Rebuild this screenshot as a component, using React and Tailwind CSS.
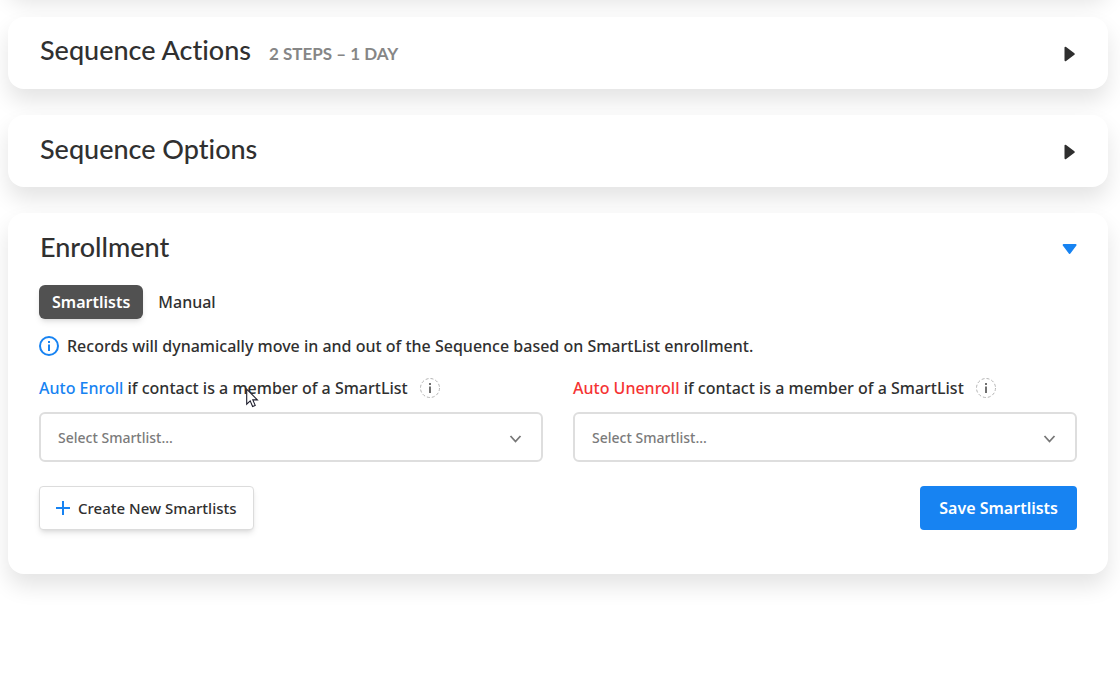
import { useState } from 'react';

const Triangle = ({ open }) => (
  <svg
    width="16"
    height="16"
    viewBox="0 0 16 16"
    className={open ? 'text-[#1783f2]' : 'text-[#2f2f2f]'}
    aria-hidden="true"
  >
    <path
      d={open ? 'M1.6 3h12L7.6 11z' : 'M3.5 1.7v12.6l8.3-6.3z'}
      fill="currentColor"
      stroke="currentColor"
      strokeWidth="2"
      strokeLinejoin="round"
    />
  </svg>
);

const Panel = ({ title, meta, open, onToggle, children }) => (
  <section className="rounded-2xl bg-white shadow-[0_12px_22px_rgba(0,0,0,0.11)]">
    <h2>
      <button
        type="button"
        onClick={onToggle}
        aria-expanded={open}
        className="flex h-[72px] w-full items-center justify-between pt-px pr-[30px] pl-8 text-left"
      >
        <span className="flex items-baseline gap-[18px] pb-[6px] font-[Lato,sans-serif] [font-variant-ligatures:none]">
          <span className="text-[27px] leading-8 text-[#303030]">{title}</span>
          {meta && <span className="text-[17px] font-bold text-[#868686]">{meta}</span>}
        </span>
        <Triangle open={open} />
      </button>
    </h2>
    {open && children}
  </section>
);

const SmartlistField = ({ id, action, color, children }) => (
  <div>
    <div className="flex h-6 items-center gap-3">
      <label htmlFor={id}>
        <span className={color}>{action}</span> if contact is a member of a SmartList
      </label>
      <button type="button" aria-label={`About ${action}`}>
        <svg width="20" height="20" viewBox="0 0 20 20" fill="none">
          <circle cx="10" cy="10" r="9.5" stroke="#b5b5b5" strokeDasharray="3 2" />
          <path d="M10 5v2M10 8.5V15" stroke="#707070" strokeWidth="2" />
        </svg>
      </button>
    </div>
    <div className="relative mt-3">
      <select
        id={id}
        className="h-[50px] w-full appearance-none rounded-md border-2 border-[#dedede] bg-white px-[17px] pt-0.5 text-sm text-[#7b7b7b]"
      >
        <option>Select Smartlist...</option>
      </select>
      {children}
      <svg
        width="14"
        height="14"
        viewBox="0 0 14 14"
        fill="none"
        className="pointer-events-none absolute top-5 right-5"
      >
        <path d="M1.5 4l5 5.5 5-5.5" stroke="#777" strokeWidth="1.8" />
      </svg>
    </div>
  </div>
);

const Pointer = () => (
  <svg
    width="13"
    height="20"
    viewBox="0 0 13 20"
    className="pointer-events-none absolute -top-6 left-[207px]"
    aria-hidden="true"
  >
    <path
      d="M.7 1.2v15l3.5-3.3 2.4 5.6 2.6-1.1-2.4-5.5h4.6z"
      fill="#fff"
      stroke="#1c1c2c"
      strokeWidth="1.1"
    />
  </svg>
);

export default function App() {
  const [open, setOpen] = useState({ actions: false, options: false, enrollment: true });
  const [tab, setTab] = useState('Smartlists');

  const toggle = (key) => setOpen({ ...open, [key]: !open[key] });

  return (
    <main className="min-h-screen overflow-hidden bg-white pr-3 pb-8 pl-2 font-['Noto_Sans',sans-serif] text-base font-medium text-[#303030]">
      <div className="-mt-[82px] flex flex-col gap-[26px]">
        {/* tail of the panel that is scrolled off the top */}
        <div className="h-[73px] rounded-2xl bg-white shadow-[0_12px_22px_rgba(0,0,0,0.11)]" />
        <Panel
          title="Sequence Actions"
          meta="2 STEPS – 1 DAY"
          open={open.actions}
          onToggle={() => toggle('actions')}
        />
        <Panel title="Sequence Options" open={open.options} onToggle={() => toggle('options')} />
        <Panel title="Enrollment" open={open.enrollment} onToggle={() => toggle('enrollment')}>
          <div className="px-[31px] pb-11">
            <div className="flex gap-0.5">
              {['Smartlists', 'Manual'].map((name) => (
                <button
                  key={name}
                  type="button"
                  onClick={() => setTab(name)}
                  className={
                    tab === name
                      ? 'h-[34px] rounded-md bg-[#515151] px-[13px] font-semibold text-white shadow-md'
                      : 'h-[34px] rounded-md px-[13px]'
                  }
                >
                  {name}
                </button>
              ))}
            </div>

            <p className="mt-[15px] flex items-center gap-2">
              <svg width="20" height="20" viewBox="0 0 20 20" fill="none" className="shrink-0">
                <circle cx="10" cy="10" r="9" stroke="#1783f2" strokeWidth="2" />
                <path d="M10 5v2M10 8.5V15" stroke="#1783f2" strokeWidth="2" />
              </svg>
              Records will dynamically move in and out of the Sequence based on SmartList
              enrollment.
            </p>

            <div className="mt-[18px] grid grid-cols-2 gap-[30px]">
              <SmartlistField id="auto-enroll" action="Auto Enroll" color="text-[#1783f2]">
                <Pointer />
              </SmartlistField>
              <SmartlistField id="auto-unenroll" action="Auto Unenroll" color="text-[#f53333]" />
            </div>

            <div className="mt-6 flex items-center justify-between">
              <button
                type="button"
                className="flex h-11 items-center gap-2 rounded border border-[#dcdcdc] bg-white px-4 text-[15px] shadow-md"
              >
                <svg width="14" height="14" viewBox="0 0 14 14">
                  <path d="M7 0v14M0 7h14" stroke="#1783f2" strokeWidth="2" />
                </svg>
                Create New Smartlists
              </button>
              <button
                type="button"
                className="h-11 rounded bg-[#1783f2] px-[19px] font-semibold text-white"
              >
                Save Smartlists
              </button>
            </div>
          </div>
        </Panel>
      </div>
    </main>
  );
}
